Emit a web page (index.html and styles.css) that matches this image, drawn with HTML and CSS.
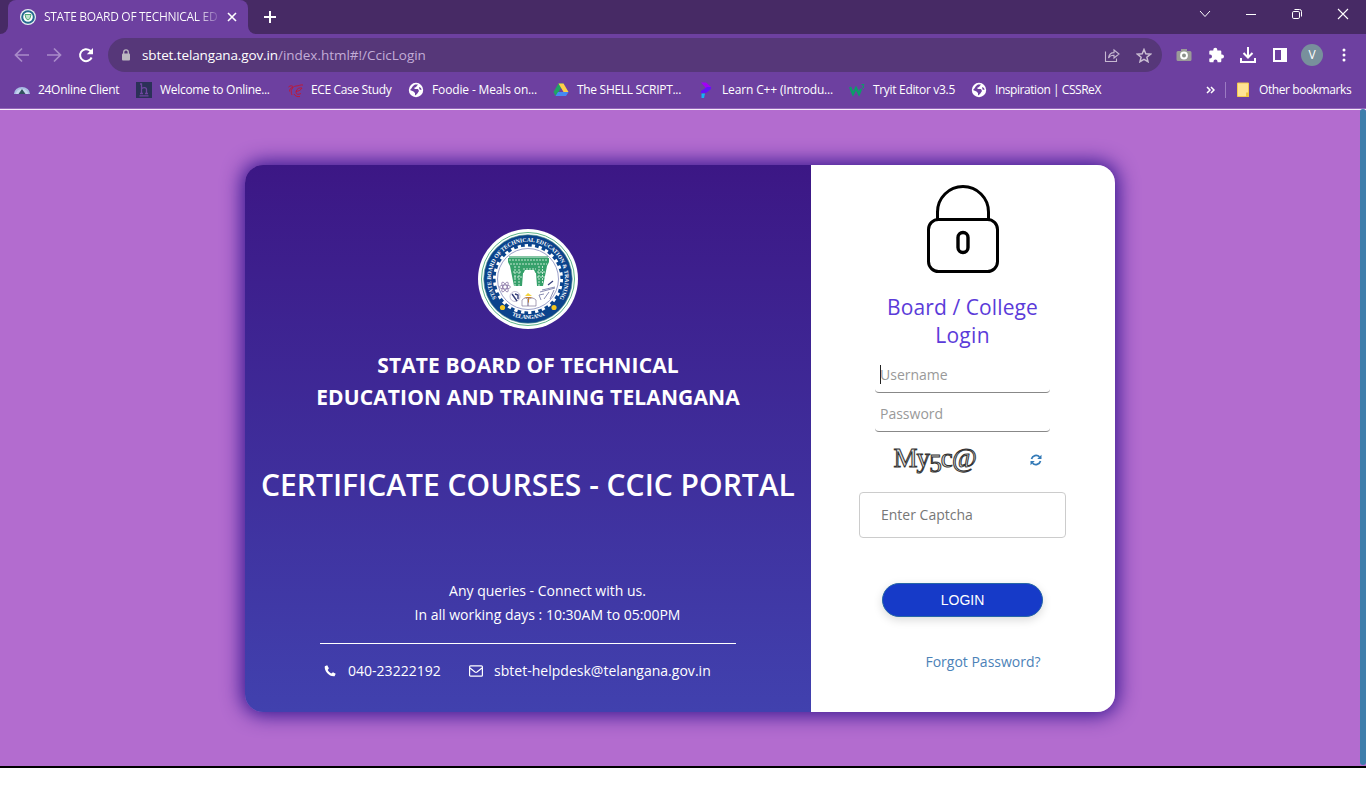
FILE: index.html
```html
<!DOCTYPE html>
<html lang="en">
<head>
<meta charset="utf-8">
<title>STATE BOARD OF TECHNICAL EDUCATION AND TRAINING</title>
<link rel="stylesheet" href="styles.css">
</head>
<body>
<header class="browser">
  <div class="tabstrip">
    <div class="tab">
      <svg class="favicon" width="16" height="16" viewBox="0 0 16 16"><circle cx="8" cy="8" r="8" fill="#e8f1f1"/><circle cx="8" cy="8" r="5.800" fill="#fff" stroke="#24688f" stroke-width="2"/><path d="M5 5.500h6L10 9.500 8 11 6 9.500z" fill="#bfe3cd" stroke="#4fa875"/></svg>
      <span class="tab-title">STATE BOARD OF TECHNICAL ED</span>
      <svg class="tab-close" width="10" height="10" viewBox="0 0 10 10"><path d="M1 1l8 8M9 1L1 9" stroke="#fff" stroke-width="1.600"/></svg>
    </div>
    <svg class="new-tab" width="12" height="12" viewBox="0 0 12 12"><path d="M6 0v12M0 6h12" stroke="#fff" stroke-width="2"/></svg>
    <div class="window-controls">
      <svg width="12" height="12" viewBox="0 0 12 12"><path d="M1 3l5 5.500L11 3" fill="none" stroke="#fff"/></svg>
      <svg width="12" height="12" viewBox="0 0 12 12"><path d="M1 6.500h10" stroke="#fff"/></svg>
      <svg width="12" height="12" viewBox="0 0 12 12"><rect x="1.500" y="3.500" width="7" height="7" rx="1.300" fill="none" stroke="#fff"/><path d="M3.500 1.500H8.500a2 2 0 0 1 2 2V8.500" fill="none" stroke="#fff"/></svg>
      <svg width="12" height="12" viewBox="0 0 12 12"><path d="M1 1l10 10M11 1L1 11" stroke="#fff" stroke-width="1.100"/></svg>
    </div>
  </div>
  <div class="toolbar">
    <div class="nav">
      <svg width="16" height="16" viewBox="0 0 16 16"><path d="M15 8H2M8 1.500L1.500 8 8 14.500" fill="none" stroke="#a98bc9" stroke-width="1.700"/></svg>
      <svg width="16" height="16" viewBox="0 0 16 16"><path d="M1 8h13M8 1.500L14.500 8 8 14.500" fill="none" stroke="#a98bc9" stroke-width="1.700"/></svg>
      <svg width="16" height="16" viewBox="0 0 16 16"><path d="M13.600 10.500A6 6 0 1 1 12 3.600L13.500 5" fill="none" stroke="#fff" stroke-width="2"/><path d="M15 1v6.200H8.800z" fill="#fff"/></svg>
    </div>
    <div class="omnibox">
      <svg class="lock" width="10" height="12" viewBox="0 0 10 12"><rect x="1" y="4.500" width="8" height="7" rx="1" fill="#bcb9c1"/><path d="M2.700 5V3.200a2.300 2.300 0 0 1 4.600 0V5" fill="none" stroke="#bcb9c1" stroke-width="1.300"/></svg>
      <span class="url"><span class="host">sbtet.telangana.gov.in</span><span class="path">/index.html#!/CcicLogin</span></span>
      <svg class="share" width="16" height="15" viewBox="0 0 16 15"><path d="M1.500 3.500v10h11v-3M4.500 10C5 6.500 7 4.600 10 4.600V2l5 4-5 4V7.300C7.500 7.200 5.700 8 4.500 10z" fill="none" stroke="#c6b8d1" stroke-width="1.100"/></svg>
      <svg class="star" width="16" height="15" viewBox="0 0 16 15"><path d="M8 1.500l1.800 4.300 4.700.4-3.600 3 1.100 4.500L8 11.300l-4 2.400 1.100-4.500-3.600-3 4.700-.4z" fill="none" stroke="#c9bdd2" stroke-width="1.500"/></svg>
    </div>
    <div class="actions">
      <svg width="16" height="16" viewBox="0 0 16 16"><path d="M2 4h3V2h6v2h3a1.500 1.500 0 0 1 1.500 1.500v7A1.500 1.500 0 0 1 14 14H2a1.500 1.500 0 0 1-1.500-1.500v-7A1.500 1.500 0 0 1 2 4z" fill="#9b9b98"/><circle cx="8" cy="8.500" r="3.900" fill="#fff"/><circle cx="8" cy="8.500" r="2" fill="#8c918b"/></svg>
      <svg width="16" height="16" viewBox="0 0 16 16"><path d="M1.300 4.500a1 1 0 0 1 1-1h3V2.700a2 2 0 0 1 4 0v.8h3a1 1 0 0 1 1 1v3h.7a2 2 0 0 1 0 4h-.7v2.800a1 1 0 0 1-1 1H9.500v-.8a2 2 0 0 0-4 0v.8H2.300a1 1 0 0 1-1-1v-2.800H2a2 2 0 0 0 0-4h-.7z" fill="#fff"/></svg>
      <svg width="16" height="16" viewBox="0 0 16 16"><path d="M8 0v10M3.500 6L8 10.500 12.500 6M1 11v4h14v-4" fill="none" stroke="#fff" stroke-width="2"/></svg>
      <svg width="16" height="16" viewBox="0 0 16 16"><rect x="2" y="2" width="12" height="12" fill="none" stroke="#fff" stroke-width="2"/><path d="M9 2h5v12H9z" fill="#fff"/></svg>
      <span class="avatar">V</span>
      <svg class="kebab" width="4" height="14" viewBox="0 0 4 14"><circle cx="2" cy="2" r="1.500" fill="#fff"/><circle cx="2" cy="7" r="1.500" fill="#fff"/><circle cx="2" cy="12" r="1.500" fill="#fff"/></svg>
    </div>
  </div>
  <nav class="bookmarks">
    <div class="bm"><svg width="16" height="16" viewBox="0 0 16 16"><path d="M0 12a8 7 0 0 1 16 0z" fill="#a9bde4"/><path d="M2 12a6 5 0 0 1 12 0z" fill="#c5d5ef"/><path d="M4.500 12L8 7l3.500 5z" fill="#31505f"/></svg><span class="l1">24Online Client</span></div>
    <div class="bm"><svg width="16" height="16" viewBox="0 0 16 16"><path d="M0 0h16v16H0z" fill="#2b3158"/><path d="M4 2h1.500v9.500M4 11.500h3M5.500 7c1-2 5-2 5 .5v4M9 11.500h3M3.500 13.800h9" fill="none" stroke="#6f45a0" stroke-width="1.300"/></svg><span class="l2">Welcome to Online...</span></div>
    <div class="bm"><svg width="16" height="16" viewBox="0 0 16 16"><path d="M.5 5c2-1.500 3-1.500 4.500-.5M1.500 9.500c0-2.500 1.500-4 3.500-4M4 13C2 9 4 4.500 8 4c3 0 4-1.500 7-1M8 9.500c1-3 3-4 6-3.500-1 2-3 3-6 3.500 0 3 2 3.500 5 2M6 12c1 2 3 3 6 2.500" fill="none" stroke="#c5152c" stroke-width=".9"/></svg><span class="l3">ECE Case Study</span></div>
    <div class="bm"><svg width="16" height="16" viewBox="0 0 16 16"><circle cx="8" cy="8" r="7.200" fill="#fff"/><path d="M7 2.500h3L8 5 6 6l1 1h3l1 2-2 3-2 1.500V11L5.500 9.500 2 8l1-1 2-3zM11 5l2 1 .5 2-2-.5z" fill="#6d40a0"/></svg><span class="l4">Foodie - Meals on...</span></div>
    <div class="bm"><svg width="16" height="16" viewBox="0 0 16 16"><path d="M5.500 1.500h5L5 11l-2.500 3L.5 10z" fill="#1fa463"/><path d="M5.500 1.500h5L15.500 10h-5z" fill="#ffcf48"/><path d="M5 10h10.500L13 14H2.500z" fill="#4688f4"/></svg><span class="l5">The SHELL SCRIPT...</span></div>
    <div class="bm"><svg width="16" height="16" viewBox="0 0 16 16"><path d="M3 .5h5l5 4.500-4 3-2-3z" fill="#a400f5"/><path d="M13 5v2L8 11 3 11V9l6-4z" fill="#6610f8"/><path d="M3.500 11.500h3.500L6 16H3.500z" fill="#12b5f5"/></svg><span class="l6">Learn C++ (Introdu...</span></div>
    <div class="bm"><svg width="16" height="16" viewBox="0 0 16 16"><path d="M1 5l3 7 3-6 3 6 2-5" fill="none" stroke="#0a9d68" stroke-width="2.300"/><path d="M12.500 2.500h2.500l-1.300 1.500 1.300 1-1 1h-1.500" fill="none" stroke="#0a9d68"/></svg><span class="l7">Tryit Editor v3.5</span></div>
    <div class="bm"><svg width="16" height="16" viewBox="0 0 16 16"><circle cx="8" cy="8" r="7.200" fill="#fff"/><path d="M7 2.500h3L8 5 6 6l1 1h3l1 2-2 3-2 1.500V11L5.500 9.500 2 8l1-1 2-3zM11 5l2 1 .5 2-2-.5z" fill="#6d40a0"/></svg><span class="l8">Inspiration | CSSReX</span></div>
    <div class="bm-more"><svg width="9" height="8" viewBox="0 0 9 8"><path d="M1 1l3 3-3 3M5 1l3 3-3 3" fill="none" stroke="#fff" stroke-width="1.500"/></svg></div>
    <div class="bm other"><svg width="13" height="16" viewBox="0 0 13 16"><path d="M.5 1h11v13.500H.5z" fill="#ffe394" stroke="#f5cb4e"/><path d="M9 15V10.500h3V15z" fill="#f0c541"/></svg><span class="l9">Other bookmarks</span></div>
  </nav>
</header>

<main class="page">
  <div class="card">
    <section class="intro">
      <svg class="emblem" width="100" height="100" viewBox="0 0 100 100">
        <defs>
          <path id="ring-top" d="M19 70A37 37 0 1 1 81 70"/>
          <path id="ring-bottom" d="M10 50A40 40 0 0 0 90 50"/>
        </defs>
        <circle cx="50" cy="50" r="50" fill="#fff"/>
        <circle cx="50" cy="50" r="46.500" fill="none" stroke="#5cb588"/>
        <circle cx="50" cy="50" r="44.300" fill="#0b438c" stroke="#5fa592" stroke-width=".6"/>
        <circle cx="50" cy="50" r="33.500" fill="none" stroke="#fff" stroke-width="3" stroke-dasharray="3.300 3.715"/>
        <circle cx="50" cy="50" r="32.500" fill="#fff"/>
        <circle cx="50" cy="50" r="30.500" fill="#fff" stroke="#8188ba" stroke-width=".8"/>
        <g fill="#35a06a"><path d="M30 29h41v4l-2 4-4 20h-6l-1-13H45l-1 13h-8l-4-20-2-4z"/><path d="M31 27h39v2H31z" opacity=".6"/></g>
        <path d="M31 31h39M32 35h37M37 37v20M41 37v20M61 37v20M64.500 37v18M45 40h13M35 43h9M59 43h8M36 48h8M59 48h8" stroke="#d7efdf" stroke-width=".9" stroke-dasharray="2 1"/>
        <path d="M45 45l2-4h9l2 4v12H45z" fill="#fff"/>
        <g fill="none" stroke="#6f5791" stroke-width=".6"><ellipse cx="27" cy="58" rx="5.500" ry="2"/><ellipse cx="27" cy="58" rx="5.500" ry="2" transform="rotate(60 27 58)"/><ellipse cx="27" cy="58" rx="5.500" ry="2" transform="rotate(120 27 58)"/></g>
        <circle cx="37" cy="67.500" r="5" fill="none" stroke="#a9a4c4" stroke-width=".7"/>
        <path d="M34 65l5 7M37 65l3 1v4" fill="none" stroke="#343d79" stroke-width="1.400"/>
        <path d="M70 56l5-4" stroke="#343d79" stroke-width="1.300"/><path d="M62 63l15-4M64 61l13-3M72 70l4-9M63 71l-2-5 5-1M66 70l5-7" fill="none" stroke="#6b6f9f" stroke-width=".8"/>
        <path d="M44 77v-6q4-4 6 0v6zM50 77v-6q4-4 8 0v6z" fill="#fff" stroke="#81759a" stroke-width=".7"/>
        <path d="M46 68h9l-4 1.500v4h-1v-4z" fill="#c07d38"/><path d="M47 67l3-3 4 3z" fill="#f4d43c"/>
        <circle cx="24.500" cy="78.500" r="2.600" fill="#f3c71f"/><circle cx="76" cy="78.500" r="2.600" fill="#f3c71f"/>
        <text class="ring-text"><textPath href="#ring-top" startOffset="1" textLength="157">STATE BOARD OF TECHNICAL EDUCATION &amp; TRAINING</textPath></text>
        <text class="ring-text"><textPath href="#ring-bottom" startOffset="46" textLength="34">TELANGANA</textPath></text>
      </svg>
      <h2 class="org"><span class="org-a">STATE BOARD OF TECHNICAL</span><br><span class="org-b">EDUCATION AND TRAINING TELANGANA</span></h2>
      <h1 class="portal">CERTIFICATE COURSES - CCIC PORTAL</h1>
      <div class="help">
        <p class="queries"><span class="q1">Any queries - Connect with us.</span><br><span class="q2">In all working days : 10:30AM to 05:00PM</span></p>
        <div class="contacts">
          <svg class="phone" width="12" height="12" viewBox="0 0 12 12"><path d="M3.200.3L.8 1.200C0 6 5.500 12 10.600 11.200l1.100-2.400-2.700-1.600-1.700 1.200C5.800 7.700 4.400 6.300 3.700 4.900L4.900 3.200z" fill="#fff"/></svg>
          <span class="tel">040-23222192</span>
          <svg class="mail" width="14" height="12" viewBox="0 0 14 12"><rect x=".6" y=".8" width="12.800" height="10.400" rx="1" fill="none" stroke="#fff" stroke-width="1.200"/><path d="M1 3l5 4q1 .7 2 0l5-4" fill="none" stroke="#fff" stroke-width="1.200"/></svg>
          <span class="email">sbtet-helpdesk@telangana.gov.in</span>
        </div>
      </div>
    </section>
    <section class="login">
      <svg class="padlock" width="74" height="90" viewBox="0 0 74 90"><path d="M11.500 35V28a25.500 25.500 0 0 1 51 0v7" fill="none" stroke="#000" stroke-width="3"/><rect x="2.500" y="35.500" width="69" height="52" rx="10" fill="none" stroke="#000" stroke-width="3"/><rect x="32" y="48.500" width="10" height="20" rx="5" fill="none" stroke="#000" stroke-width="3.400"/></svg>
      <h3 class="login-title"><span class="t1">Board / College</span><br><span class="t2">Login</span></h3>
      <div class="field"><i class="caret"></i><span class="ph-user">Username</span></div>
      <div class="field"><span class="ph-pass">Password</span></div>
      <div class="captcha">
        <span class="captcha-text">My<span class="low">5</span>c@</span>
        <svg width="12" height="12" viewBox="0 0 12 12"><path d="M1.500 5A4.700 4.700 0 0 1 9.500 2.900M10.500 7A4.700 4.700 0 0 1 2.500 9.100" fill="none" stroke="#337ab7" stroke-width="1.700"/><path d="M11.500.7V5H7.200zM.5 11.300V7h4.300z" fill="#337ab7"/></svg>
      </div>
      <div class="captcha-input">Enter Captcha</div>
      <button class="submit">LOGIN</button>
      <a class="forgot">Forgot Password?</a>
    </section>
  </div>
  <div class="scrollbar"></div>
</main>
</body>
</html>
```
FILE: styles.css
```css
* { box-sizing: border-box; }
body { margin: 0; height: 800px; overflow: hidden; background: #fff; font-family: "Open Sans", "Noto Sans", sans-serif; }
svg { display: block; flex: none; }
span { white-space: nowrap; }

.browser { height: 110px; background: #6d40a0; color: #fff; border-bottom: 1px solid #f4eaf9; box-shadow: inset 0 -1px #9466ba; font-size: 12px; }
.tabstrip { height: 34px; display: flex; align-items: stretch; background: linear-gradient(#6d40a0, #6d40a0) 0 100% / 256px 8px no-repeat, #472a65; }
.tabstrip::before { content: ""; width: 8px; margin-right: -8px; background: #472a65; border-radius: 0 0 8px 0; }
.tab { position: relative; width: 240px; margin: 0 8px; padding: 0 11px 0 12px; display: flex; align-items: center; background: #6d40a0; border-radius: 8px 8px 0 0; }
.tab::after { content: ""; position: absolute; left: 240px; bottom: 0; width: 10px; height: 34px; background: #472a65; border-radius: 0 0 0 8px; }
.tab-title { margin: -1px 0 0 8px; letter-spacing: -.31px; color: transparent; background: linear-gradient(90deg, #fff 88%, #8a65b3 100%); -webkit-background-clip: text; background-clip: text; }
.tab-close { margin-left: auto; }
.new-tab { align-self: center; margin-left: 8px; }
.window-controls { margin: 8px 17px 0 auto; display: flex; gap: 34px; }

.toolbar { height: 42px; display: flex; align-items: center; }
.nav { display: flex; gap: 16px; margin-left: 14px; }
.omnibox { width: 1054px; height: 34px; margin-left: 14px; padding: 0 10px 0 13px; display: flex; align-items: center; border-radius: 17px; background: #563779; }
.url { margin: -1px 0 0 11px; font-size: 13.500px; }
.host { color: #fff; letter-spacing: -.12px; }
.path { color: #c2acd7; letter-spacing: -.02px; }
.share { margin-left: auto; margin-right: 16px; }
.actions { flex: 1; display: flex; align-items: center; gap: 16px; margin-left: 14px; }
.avatar { width: 22px; height: 22px; margin: 0 0 0 -3px; border-radius: 50%; background: #78909c; text-align: center; line-height: 22px; }
.kebab { margin-left: 3px; }

.bookmarks { height: 28px; padding-left: 14px; display: grid; grid-template-columns: 122px 152px 120px 145px 145px 151px 122px 235px 31px 1fr; align-items: center; }
.bm { display: flex; align-items: center; gap: 8px; }
.bm span { line-height: 16px; letter-spacing: -.3px; }
.bm .l3 { margin-left: -1px; letter-spacing: -.36px; }
.bm .l4 { letter-spacing: -.14px; }
.bm .l6 { letter-spacing: -.15px; }
.bm .l7 { letter-spacing: -.32px; }
.bm .l8 { letter-spacing: -.45px; }
.bm .l9 { letter-spacing: -.42px; }
.bm-more { height: 16px; width: 20px; display: flex; align-items: center; border-right: 1px solid #9c7bc2; }
.other { gap: 9px; }

.page { position: relative; height: 658px; padding: 55px 0 0 245px; background: #b36ccf; border-bottom: 2px solid #000; }
.scrollbar { position: absolute; right: 0; top: -1px; width: 6px; height: 656px; border-radius: 4px; background: #3e7eab; }
.card { width: 870px; height: 547px; display: flex; border-radius: 18px; overflow: hidden; box-shadow: 0 0 20px 3px #32148e; }
.intro { width: 566px; padding-top: 64px; display: flex; flex-direction: column; align-items: center; color: #fff; background: linear-gradient(#3c1785, #4141ae); }
.ring-text { font: bold 5.800px "Liberation Serif", serif; fill: #fff; }
.org { margin: 20px 0 0; font-size: 21px; line-height: 32px; font-weight: 700; text-align: center; letter-spacing: .12px; }
.portal { margin: 50px 0 0; font-size: 30px; line-height: 44px; font-weight: 600; white-space: nowrap; }
.help { width: 416px; margin-top: 72px; }
.queries { margin: 0; padding: 0 0 16px 39px; border-bottom: 1px solid #fff; text-align: center; font-size: 14px; line-height: 24px; }
.contacts { display: flex; align-items: center; height: 24px; margin-top: 15px; padding-left: 4px; font-size: 14px; }
.contacts span { margin-top: -2px; letter-spacing: .02px; }
.tel { margin-left: 12px; width: 93px; }
.mail { margin-left: 28px; }
.email { margin-left: 11px; }

.login { width: 304px; padding: 19px 1px 0 0; display: flex; flex-direction: column; align-items: center; background: #fff; }
.padlock { margin-left: 1px; }
.login-title { margin: 19px 0 0; font-size: 21px; line-height: 28px; font-weight: 400; text-align: center; color: #5b3bd9; }
.t1 { letter-spacing: .1px; }
.t2 { letter-spacing: .3px; }
.field { width: 175px; height: 39px; padding: 2px 5px 0; display: flex; align-items: center; color: #999; font-size: 14px; border-bottom: 1px solid #888; border-radius: 4px; }
.login-title + .field { margin-top: 5px; }
.caret { width: 1px; height: 19px; margin-right: -1px; background: #222; }
.captcha { width: 166px; height: 58px; padding: 0 4px 2px 14px; display: flex; align-items: center; justify-content: space-between; }
.captcha-text { margin-top: -4px; font-family: "Liberation Serif", serif; font-size: 27px; line-height: 32px; color: #e2e2e2; -webkit-text-stroke: 1px #333; letter-spacing: -.9px; }
.low { display: inline-block; font-size: 25px; transform: translateY(5px); }
.captcha-input { width: 207px; height: 46px; margin-top: 2px; padding-left: 21px; border: 1px solid #ccc; border-radius: 4px; color: #777; font-size: 14px; line-height: 44px; }
.submit { width: 161px; height: 34px; margin-top: 45px; padding: 0; border: 1px solid #2667a7; border-radius: 17px; background: #163ac8; color: #fff; font: 14px "Liberation Sans", sans-serif; box-shadow: 0 3px 10px rgba(0, 0, 0, .15); }
.forgot { margin: 34px 0 0 41px; font-size: 14px; line-height: 22px; color: #4b82b8; }
```
